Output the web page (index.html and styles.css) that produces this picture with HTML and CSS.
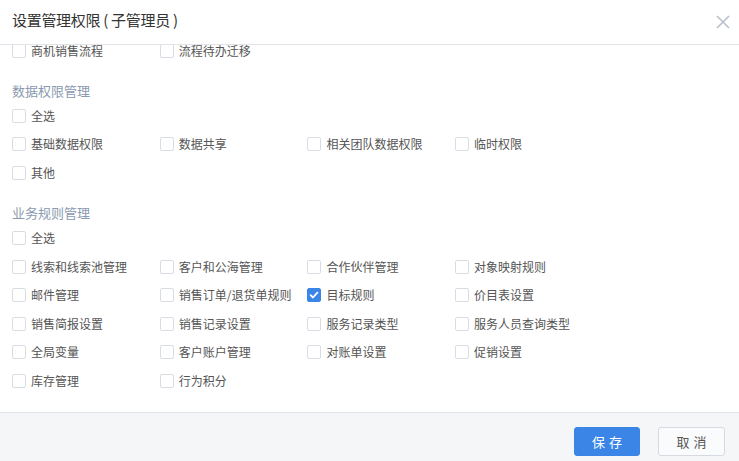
FILE: index.html
```html
<!DOCTYPE html>
<html lang="zh-CN">
<head>
<meta charset="utf-8">
<title>设置管理权限</title>
<link rel="stylesheet" href="styles.css">
</head>
<body>
<div class="dialog">
  <div class="header">
    <div class="title">设置管理权限 ( 子管理员 )</div>
    <svg class="close" width="14" height="14" viewBox="0 0 14 14"><path d="M1 1L13 13M13 1L1 13" stroke="#b8c0cc" stroke-width="1.6" fill="none"/></svg>
  </div>
  <div class="body">
    <div class="inner">
      <div class="grid">
        <label class="item"><span class="cb"></span>商机销售流程</label>
        <label class="item"><span class="cb"></span>流程待办迁移</label>
      </div>

      <div class="section-title">数据权限管理</div>
      <div class="grid">
        <label class="item"><span class="cb"></span>全选</label>
      </div>
      <div class="grid">
        <label class="item"><span class="cb"></span>基础数据权限</label>
        <label class="item"><span class="cb"></span>数据共享</label>
        <label class="item"><span class="cb"></span>相关团队数据权限</label>
        <label class="item"><span class="cb"></span>临时权限</label>
        <label class="item"><span class="cb"></span>其他</label>
      </div>

      <div class="section-title">业务规则管理</div>
      <div class="grid">
        <label class="item"><span class="cb"></span>全选</label>
      </div>
      <div class="grid">
        <label class="item"><span class="cb"></span>线索和线索池管理</label>
        <label class="item"><span class="cb"></span>客户和公海管理</label>
        <label class="item"><span class="cb"></span>合作伙伴管理</label>
        <label class="item"><span class="cb"></span>对象映射规则</label>
        <label class="item"><span class="cb"></span>邮件管理</label>
        <label class="item"><span class="cb"></span>销售订单/退货单规则</label>
        <label class="item"><span class="cb checked"><svg width="10" height="10" viewBox="0 0 10 10"><path d="M1.6 5.2L4 7.5L8.4 2.6" stroke="#fff" stroke-width="1.8" fill="none" stroke-linecap="round" stroke-linejoin="round"/></svg></span>目标规则</label>
        <label class="item"><span class="cb"></span>价目表设置</label>
        <label class="item"><span class="cb"></span>销售简报设置</label>
        <label class="item"><span class="cb"></span>销售记录设置</label>
        <label class="item"><span class="cb"></span>服务记录类型</label>
        <label class="item"><span class="cb"></span>服务人员查询类型</label>
        <label class="item"><span class="cb"></span>全局变量</label>
        <label class="item"><span class="cb"></span>客户账户管理</label>
        <label class="item"><span class="cb"></span>对账单设置</label>
        <label class="item"><span class="cb"></span>促销设置</label>
        <label class="item"><span class="cb"></span>库存管理</label>
        <label class="item"><span class="cb"></span>行为积分</label>
      </div>
    </div>
  </div>
  <div class="footer">
    <button class="btn primary">保存</button>
    <button class="btn">取消</button>
  </div>
</div>
</body>
</html>
```

FILE: styles.css
```css
* { box-sizing: border-box; }
html, body { margin: 0; padding: 0; background: #fff; }
body {
  font-family: "Noto Sans CJK SC", "Noto Sans", "Liberation Sans", sans-serif;
  color: #555;
}
.dialog {
  width: 739px;
  height: 461px;
  display: flex;
  flex-direction: column;
  overflow: hidden;
}
.header {
  height: 45px;
  flex: none;
  border-bottom: 1px solid #e1e4e9;
  display: flex;
  align-items: center;
  justify-content: space-between;
  padding: 0 9px 4px 12px;
}
.title {
  font-size: 15px;
  color: #333;
  line-height: 24px;
  white-space: pre;
  letter-spacing: -0.3px;
}
.close { display: block; margin-top: 3px; }
.body {
  flex: 1;
  overflow: hidden;
}
.inner {
  margin-top: -8.3px;
  padding-left: 12px;
}
.grid {
  display: grid;
  grid-template-columns: repeat(4, 147.7px);
}
.item {
  height: 28.6px;
  display: flex;
  align-items: center;
  font-size: 12px;
  line-height: 12px;
  color: #555;
  white-space: nowrap;
}
.cb {
  width: 14px;
  height: 14px;
  border: 1px solid #d9dde3;
  border-radius: 2px;
  background: #fff;
  margin-right: 5px;
  flex: none;
  display: flex;
  align-items: center;
  justify-content: center;
}
.cb.checked {
  background: #3a85e6;
  border-color: #3a85e6;
}
.cb svg { display: block; }
.section-title {
  margin-top: 13.3px;
  height: 23px;
  line-height: 23px;
  font-size: 13px;
  color: #8a9ab0;
}
.footer {
  flex: none;
  height: 49px;
  border-top: 1px solid #e1e4e9;
  background: #f5f6f8;
  display: flex;
  justify-content: flex-end;
  align-items: flex-start;
  gap: 18px;
  padding: 14px 14px 0 0;
}
.btn {
  width: 67px;
  height: 29px;
  border: 1px solid #d6dae0;
  border-radius: 3px;
  background: #fafbfc;
  color: #555;
  font-family: inherit;
  font-size: 13px;
  letter-spacing: 4px;
  padding: 0 0 0 4px;
  cursor: pointer;
}
.btn.primary {
  width: 66px;
  background: #3a85e6;
  border-color: #3a85e6;
  color: #fff;
}
```
